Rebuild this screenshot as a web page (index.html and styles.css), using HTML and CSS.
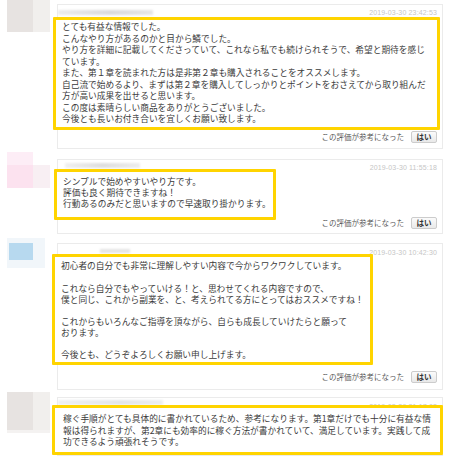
FILE: index.html
```html
<!DOCTYPE html>
<html lang="ja">
<head>
<meta charset="utf-8">
<title>レビュー</title>
<link rel="stylesheet" href="styles.css">
</head>
<body>
<div class="list">
  <div class="review r1">
    <div class="avatar av-gray"><span class="av-main"></span><span class="av-side"></span></div>
    <div class="card">
      <div class="card-head"><span class="name"></span><span class="date">2019-03-30 23:42:53</span></div>
      <div class="mark">とても有益な情報でした。<br>こんなやり方があるのかと目から鱗でした。<br>やり方を詳細に記載してくださっていて、これなら私でも続けられそうで、希望と期待を感じ<br>ています。<br>また、第１章を読まれた方は是非第２章も購入されることをオススメします。<br>自己流で始めるより、まずは第２章を購入してしっかりとポイントをおさえてから取り組んだ<br>方が高い成果を出せると思います。<br>この度は素晴らしい商品をありがとうございました。<br>今後とも長いお付き合いを宜しくお願い致します。</div>
      <div class="card-foot"><span class="helpful">この評価が参考になった</span><button class="yes">はい</button></div>
    </div>
  </div>

  <div class="review r2">
    <div class="avatar av-pink"><span class="av-main"></span><span class="av-side"></span></div>
    <div class="card">
      <div class="card-head"><span class="name"></span><span class="date">2019-03-30 11:55:18</span></div>
      <div class="mark">シンプルで始めやすいやり方です。<br>評価も良く期待できますね！<br>行動あるのみだと思いますので早速取り掛かります。</div>
      <div class="card-foot"><span class="helpful">この評価が参考になった</span><button class="yes">はい</button></div>
    </div>
  </div>

  <div class="review r3">
    <div class="avatar av-blue"><span class="av-main"></span></div>
    <div class="card">
      <div class="card-head"><span class="name"></span><span class="date">2019-03-30 10:42:30</span></div>
      <div class="mark">初心者の自分でも非常に理解しやすい内容で今からワクワクしています。<br><br>これなら自分でもやっていける！と、思わせてくれる内容ですので、<br>僕と同じ、これから副業を、と、考えられてる方にとってはおススメですね！<br><br>これからもいろんなご指導を頂ながら、自らも成長していけたらと願って<br>おります。<br><br>今後とも、どうぞよろしくお願い申し上げます。</div>
      <div class="card-foot"><span class="helpful">この評価が参考になった</span><button class="yes">はい</button></div>
    </div>
  </div>

  <div class="review r4">
    <div class="avatar av-gray"><span class="av-main"></span><span class="av-side"></span></div>
    <div class="card">
      <div class="card-head"><span class="name"></span><span class="date">2019-03-29 21:17:08</span></div>
      <div class="mark">稼ぐ手順がとても具体的に書かれているため、参考になります。第1章だけでも十分に有益な情<br>報は得られますが、第2章にも効率的に稼ぐ方法が書かれていて、満足しています。実践して成<br>功できるよう頑張れそうです。</div>
    </div>
  </div>
</div>
</body>
</html>
```

FILE: styles.css
```css
html, body {
  margin: 0;
  padding: 0;
  background: #ffffff;
  height: 460px;
  overflow: hidden;
}

body {
  font-family: "Noto Sans CJK JP", "Noto Sans", sans-serif;
  color: #333333;
}

.list {
  display: flex;
  flex-direction: column;
  padding-left: 7px;
}

.review {
  display: flex;
  align-items: flex-start;
}

.r2 { margin-top: 3px; }
.r3 { margin-top: 4px; }
.r4 { margin-top: 2px; }

/* blurred avatars */
.avatar {
  width: 43px;
  flex: 0 0 43px;
  display: flex;
}

.av-main, .av-side {
  display: block;
}

.av-gray .av-main {
  width: 26px;
  height: 32px;
  background: #e7e3e1;
  filter: blur(0.4px);
}

.av-gray .av-side {
  width: 17px;
  height: 32px;
  background: #f1efed;
}

.r4 .av-gray .av-main,
.r4 .av-gray .av-side {
  height: 38px;
  box-shadow: 0 3px 0 #f4f2f1;
}

.av-pink .av-main {
  width: 26px;
  height: 36px;
  background: linear-gradient(180deg, #fdedf6 0, #fdedf6 35%, #fce2ef 36%, #fce2ef 100%);
}

.av-pink .av-side {
  width: 17px;
  height: 23px;
  margin-top: 13px;
  background: #f8eff3;
}

.av-blue {
  width: 38px;
  flex-basis: 38px;
  margin-right: 5px;
  height: 30px;
  background: #f1f6fa;
  padding: 5px 0 0 2px;
  box-sizing: border-box;
}

.av-blue .av-main {
  width: 24px;
  height: 17px;
  background: #b7d9ef;
}

/* card */
.card {
  width: 386px;
  box-sizing: border-box;
  margin-left: 7px;
  border: 1px solid #ebebeb;
  background: #ffffff;
  display: flex;
  flex-direction: column;
}

.r1 .card { margin-top: 4px; }
.r2 .card { margin-top: 7px; }
.r3 .card { margin-top: 5px; }
.r4 .card { margin-top: 5px; }

.card-head {
  display: flex;
  justify-content: space-between;
  align-items: flex-start;
  padding-right: 5px;
  overflow: visible;
}

.name {
  display: block;
  height: 5px;
  background: linear-gradient(90deg, #ececec, #dadada 55%, #e6e6e6);
  filter: blur(0.8px);
}

.date {
  font-family: "Liberation Sans", Arial, sans-serif;
  font-size: 7px;
  line-height: 8px;
  letter-spacing: 0.15px;
  color: #c6c6c6;
  white-space: nowrap;
}

.r1 .card-head { height: 12px; }
.r1 .name { width: 95px; margin-top: 5px; }
.r1 .date { margin-top: 4px; }

.r2 .card-head { height: 9px; }
.r2 .name { width: 75px; margin: 3px 0 0 7px; background: linear-gradient(90deg, #f0f0f0, #dedede 50%, #ededed); }
.r2 .date { margin-top: 4px; }

.r3 .card-head { height: 10px; }
.r3 .name { width: 30px; height: 4px; margin: 5px 0 0 42px; background: #e4e4e4; }
.r3 .date { margin-top: 5px; }

.r4 .card-head { height: 7px; }
.r4 .name { width: 105px; margin-top: 2px; background: linear-gradient(90deg, #eef0f2, #e2e5e8 60%, #eceef0); }
.r4 .date { margin-top: 5px; }

/* yellow highlighted body */
.mark {
  position: relative;
  z-index: 1;
  box-sizing: border-box;
  margin-left: -5px;
  border: 3px solid #ffd400;
  border-radius: 1px;
  background: #ffffff;
  font-size: 8.7px;
  color: #3a3a3a;
  white-space: nowrap;
  padding-left: 6px;
}

.r1 .mark { width: 387px; line-height: 11.5px; padding-top: 1px; padding-bottom: 2px; }
.r2 .mark { width: 222px; line-height: 11.3px; padding-top: 4px; padding-bottom: 8px; margin-left: -4px; }
.r3 .mark { width: 321px; line-height: 11.1px; padding-top: 3px; padding-bottom: 2px; margin-left: -6px; }
.r4 .mark { width: 391px; line-height: 11.3px; padding-top: 5px; padding-bottom: 5px; padding-left: 8px; margin-left: -6px; }

/* footer */
.card-foot {
  display: flex;
  justify-content: flex-end;
  align-items: center;
  gap: 7px;
  padding-right: 5px;
}

.r1 .card-foot { padding-top: 1px; padding-bottom: 5px; }
.r2 .card-foot { margin-top: -3px; padding-bottom: 4px; }
.r3 .card-foot { padding-top: 6px; padding-bottom: 6px; }

.helpful {
  font-size: 7.5px;
  line-height: 12px;
  color: #5a5a5a;
}

.yes {
  width: 26px;
  height: 12px;
  padding: 0;
  border: 1px solid #cccccc;
  border-radius: 2px;
  background: linear-gradient(180deg, #fbfbfb, #e9e9e9);
  font-family: "Noto Sans CJK JP", sans-serif;
  font-size: 7.5px;
  font-weight: bold;
  line-height: 10px;
  color: #333333;
}
```
